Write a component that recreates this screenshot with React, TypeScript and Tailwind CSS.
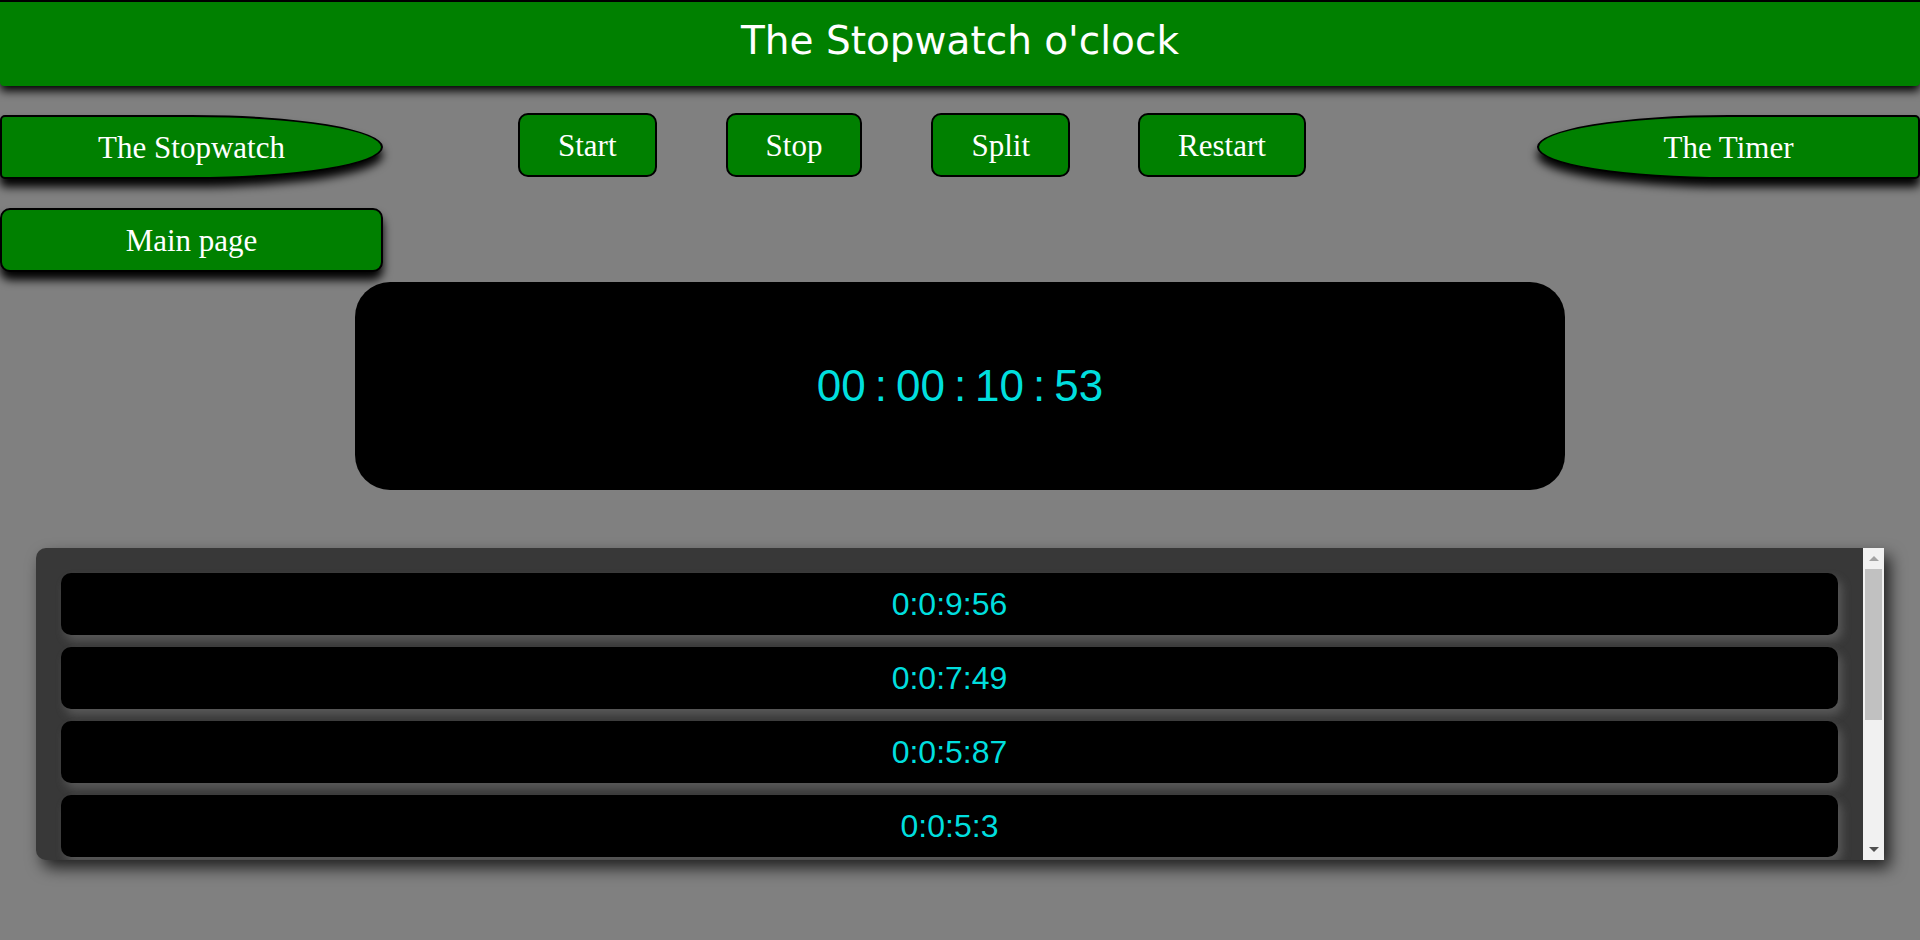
import React, { Fragment } from "react";

const laps = ["0:0:9:56", "0:0:7:49", "0:0:5:87", "0:0:5:3"];
const time = ["00", "00", "10", "53"];

const btn =
  "h-[64px] px-[38px] border-2 border-black bg-[#008000] rounded-[10px] flex items-center justify-center text-white text-[31px] leading-none font-['Liberation_Serif',serif]";

export default function App() {
  return (
    <div className="min-h-screen bg-[#808080] overflow-hidden">
      <header className="h-[86px] border-t-2 border-black bg-[#008000] rounded-b-[4px] shadow-[0_5px_10px_black] pt-[12px] flex justify-center">
        <h1 className="text-white text-[39px] leading-[54px] font-['DejaVu_Sans',sans-serif]">
          The Stopwatch o'clock
        </h1>
      </header>

      <div className="flex items-start mt-[27px]">
        <button className="w-[383px] h-[64px] mt-[2px] border-2 border-black bg-[#008000] rounded-[5px_50%_50%_5px/5px_50%_50%_5px] shadow-[0_8px_10px_black] flex items-center justify-center text-white text-[31px] leading-none font-['Liberation_Serif',serif]">
          The Stopwatch
        </button>
        <button className={`${btn} ml-[135px]`}>Start</button>
        <button className={`${btn} ml-[69px]`}>Stop</button>
        <button className={`${btn} ml-[69px]`}>Split</button>
        <button className={`${btn} ml-[68px]`}>Restart</button>
        <button className="ml-auto w-[383px] h-[64px] mt-[2px] border-2 border-black bg-[#008000] rounded-[50%_5px_5px_50%/50%_5px_5px_50%] shadow-[0_8px_10px_black] flex items-center justify-center text-white text-[31px] leading-none font-['Liberation_Serif',serif]">
          The Timer
        </button>
      </div>

      <button className="mt-[29px] w-[383px] h-[64px] border-2 border-black bg-[#008000] rounded-[10px] shadow-[0_8px_10px_black] flex items-center justify-center text-white text-[31px] leading-none font-['Liberation_Serif',serif]">
        Main page
      </button>

      <div className="mt-[10px] mx-auto w-[1210px] h-[208px] bg-black rounded-[35px] flex items-center justify-center">
        <span className="text-[44px] leading-none text-[#00dede] font-['Liberation_Sans',sans-serif]">
          {time.map((t, i) => (
            <Fragment key={i}>
              {i > 0 && <span className="px-[9px]">:</span>}
              {t}
            </Fragment>
          ))}
        </span>
      </div>

      <div className="mt-[58px] mx-[36px] h-[312px] flex bg-[#383838] rounded-l-[10px] shadow-[6px_8px_16px_rgba(0,0,0,0.75)]">
        <div className="flex-1 overflow-hidden px-[25px] pt-[25px] flex flex-col gap-[12px]">
          {laps.map((l, i) => (
            <div
              key={i}
              className="h-[62px] shrink-0 rounded-[10px] bg-black shadow-[4px_6px_10px_rgba(128,128,128,0.45)] flex items-center justify-center text-[32px] leading-none text-[#00dede] font-['Liberation_Sans',sans-serif]"
            >
              {l}
            </div>
          ))}
        </div>
        <div className="w-[21px] bg-[#f1f1f1] flex flex-col">
          <div className="h-[21px] flex items-center justify-center">
            <div className="w-0 h-0 border-l-[5px] border-r-[5px] border-b-[5px] border-l-transparent border-r-transparent border-b-[#a3a3a3]" />
          </div>
          <div className="h-[151px] mx-[2px] bg-[#c1c1c1]" />
          <div className="flex-1" />
          <div className="h-[21px] flex items-center justify-center">
            <div className="w-0 h-0 border-l-[5px] border-r-[5px] border-t-[5px] border-l-transparent border-r-transparent border-t-[#505050]" />
          </div>
        </div>
      </div>
    </div>
  );
}
